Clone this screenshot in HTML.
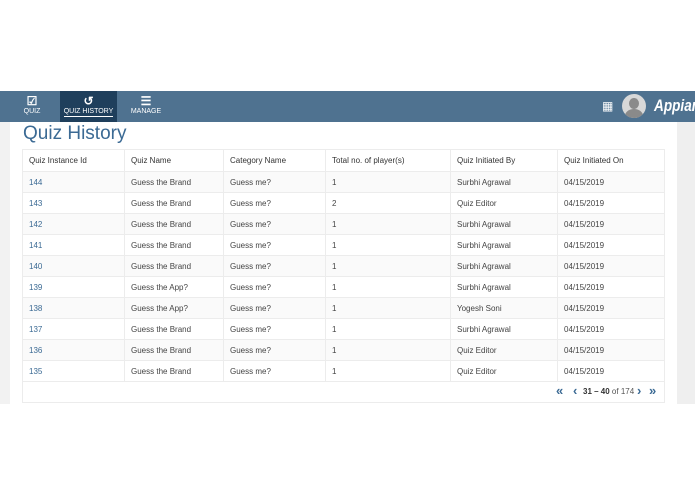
<!DOCTYPE html>
<html><head><meta charset="utf-8"><style>
body{margin:0;width:695px;height:494px;background:#fff;font-family:"Liberation Sans",sans-serif;position:relative;overflow:hidden}
.nav{position:absolute;left:0;top:91px;width:695px;height:31px;background:#4f7290}
.tab{position:absolute;top:0;height:31px;color:#fff;font-size:7px;text-align:center}
.tab .ic{font-size:12px;line-height:12px;margin-top:4px;height:13px;font-weight:bold}
.left{position:absolute;left:0;top:122px;width:10px;height:282px;background:#f2f2f2}
.right{position:absolute;left:677px;top:122px;width:18px;height:282px;background:#efefef}
.panel{position:absolute;left:10px;top:122px;width:667px;height:282px;background:#fff}
h1{position:absolute;left:23px;top:123px;margin:0;font-weight:normal;font-size:19px;color:#3b6a94}
table{position:absolute;left:22px;top:149px;width:643px;border-collapse:collapse;font-size:8px;color:#444}
td,th{border:1px solid #ececec;height:20px;padding:0 6px;text-align:left}
th{font-weight:normal;color:#333;height:21px}
tr:nth-child(even) td{background:#fafafa}
td.id{color:#3b6a94}
.pg{position:absolute;left:22px;top:382px;width:641px;height:20px;border:1px solid #ececec;border-top:none;font-size:8px;color:#555}
.pg span{position:absolute;top:5px}
.b{color:#3b6a94;font-weight:bold}
</style></head><body>
<div class="nav">
<div class="tab" style="left:18px;width:28px"><div class="ic">☑</div><div>QUIZ</div></div>
<div class="tab" style="left:60px;width:57px;background:#1f3f5c"><div class="ic">↺</div><div style="border-bottom:1px solid #fff;display:inline-block;padding-bottom:1px">QUIZ HISTORY</div></div>
<div class="tab" style="left:128px;width:36px"><div class="ic">☰</div><div>MANAGE</div></div>
<div style="position:absolute;left:602px;top:9px;width:12px;height:12px;color:#fff;font-size:12px;line-height:12px">▦</div>
<div style="position:absolute;left:622px;top:3px;width:24px;height:24px;border-radius:50%;background:#d8d8d8;overflow:hidden"><div style="position:absolute;left:7px;top:4px;width:10px;height:11px;border-radius:50%;background:#8a8a8a"></div><div style="position:absolute;left:3px;top:15px;width:18px;height:14px;border-radius:50%;background:#8a8a8a"></div></div>
<div style="position:absolute;left:654px;top:5px;color:#fff;font-size:17px;font-weight:bold;font-style:italic;transform:scaleX(0.8);transform-origin:left top;white-space:nowrap">Appian</div>
</div>
<div class="left"></div><div class="right"></div><div class="panel"></div>
<h1>Quiz History</h1>
<table>
<tr><th style="width:89px">Quiz Instance Id</th><th style="width:86px">Quiz Name</th><th style="width:89px">Category Name</th><th style="width:112px">Total no. of player(s)</th><th style="width:94px">Quiz Initiated By</th><th>Quiz Initiated On</th></tr>
<tr><td class="id">144</td><td>Guess the Brand</td><td>Guess me?</td><td>1</td><td>Surbhi Agrawal</td><td>04/15/2019</td></tr>
<tr><td class="id">143</td><td>Guess the Brand</td><td>Guess me?</td><td>2</td><td>Quiz Editor</td><td>04/15/2019</td></tr>
<tr><td class="id">142</td><td>Guess the Brand</td><td>Guess me?</td><td>1</td><td>Surbhi Agrawal</td><td>04/15/2019</td></tr>
<tr><td class="id">141</td><td>Guess the Brand</td><td>Guess me?</td><td>1</td><td>Surbhi Agrawal</td><td>04/15/2019</td></tr>
<tr><td class="id">140</td><td>Guess the Brand</td><td>Guess me?</td><td>1</td><td>Surbhi Agrawal</td><td>04/15/2019</td></tr>
<tr><td class="id">139</td><td>Guess the App?</td><td>Guess me?</td><td>1</td><td>Surbhi Agrawal</td><td>04/15/2019</td></tr>
<tr><td class="id">138</td><td>Guess the App?</td><td>Guess me?</td><td>1</td><td>Yogesh Soni</td><td>04/15/2019</td></tr>
<tr><td class="id">137</td><td>Guess the Brand</td><td>Guess me?</td><td>1</td><td>Surbhi Agrawal</td><td>04/15/2019</td></tr>
<tr><td class="id">136</td><td>Guess the Brand</td><td>Guess me?</td><td>1</td><td>Quiz Editor</td><td>04/15/2019</td></tr>
<tr><td class="id">135</td><td>Guess the Brand</td><td>Guess me?</td><td>1</td><td>Quiz Editor</td><td>04/15/2019</td></tr>
</table>
<div class="pg">
<span class="b" style="left:533px;top:1px;font-size:13px">«</span>
<span class="b" style="left:550px;top:1px;font-size:13px">‹</span>
<span style="left:560px"><b style="color:#333">31 – 40</b> of 174</span>
<span class="b" style="left:614px;top:1px;font-size:13px">›</span>
<span class="b" style="left:626px;top:1px;font-size:13px">»</span>
</div>
</body></html>
